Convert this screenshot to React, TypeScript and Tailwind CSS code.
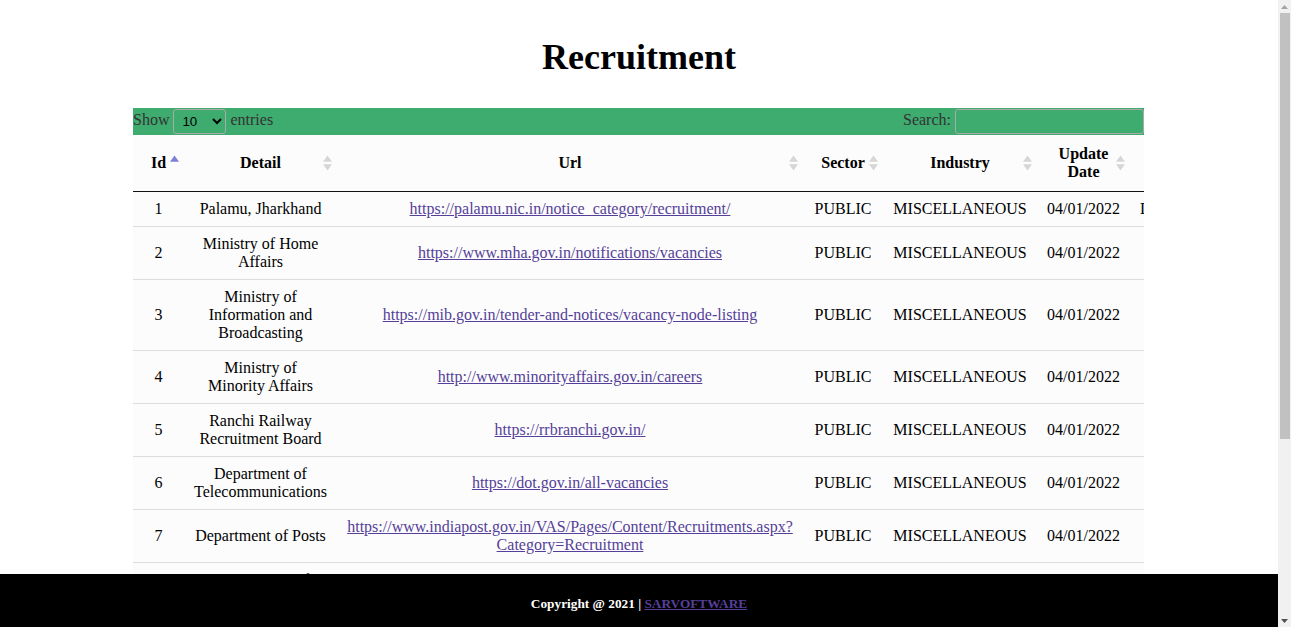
import React from "react";

type Row = {
  id: number;
  detail: string[];
  url: string[];
  desc: string;
};

const rows: Row[] = [
  { id: 1, detail: ["Palamu, Jharkhand"], url: ["https://palamu.nic.in/notice_category/recruitment/"], desc: "Deputy Commissioner Office, Palamu" },
  { id: 2, detail: ["Ministry of Home", "Affairs"], url: ["https://www.mha.gov.in/notifications/vacancies"], desc: "Central Govt." },
  { id: 3, detail: ["Ministry of", "Information and", "Broadcasting"], url: ["https://mib.gov.in/tender-and-notices/vacancy-node-listing"], desc: "Central Govt." },
  { id: 4, detail: ["Ministry of", "Minority Affairs"], url: ["http://www.minorityaffairs.gov.in/careers"], desc: "Central Govt." },
  { id: 5, detail: ["Ranchi Railway", "Recruitment Board"], url: ["https://rrbranchi.gov.in/"], desc: "Central Govt." },
  { id: 6, detail: ["Department of", "Telecommunications"], url: ["https://dot.gov.in/all-vacancies"], desc: "Central Govt." },
  { id: 7, detail: ["Department of Posts"], url: ["https://www.indiapost.gov.in/VAS/Pages/Content/Recruitments.aspx?", "Category=Recruitment"], desc: "Central Govt." },
  { id: 8, detail: ["Government of", "Jharkhand"], url: ["https://www.jharkhand.gov.in/"], desc: "State Govt." },
  { id: 9, detail: ["Union Public", "Service Commission"], url: ["https://upsc.gov.in/recruitment/recruitment-advertisement"], desc: "Central Govt." },
  { id: 10, detail: ["Ministry of", "External Affairs"], url: ["https://mea.gov.in/vacancies.htm"], desc: "Central Govt." },
];

function SortBoth() {
  return (
    <svg width="9" height="15" viewBox="0 0 9 15" className="absolute right-[5px] top-1/2 -translate-y-1/2">
      <polygon points="4.5,0 9,6.3 0,6.3" fill="#d6d6d6" />
      <polygon points="0,8.7 9,8.7 4.5,15" fill="#d6d6d6" />
    </svg>
  );
}

function SortAsc() {
  return (
    <svg width="9" height="15" viewBox="0 0 9 15" className="absolute right-[5px] top-1/2 -translate-y-1/2">
      <polygon points="4.5,0 9,6.3 0,6.3" fill="#7f7fd5" />
    </svg>
  );
}

function Lines({ lines }: { lines: string[] }) {
  return (
    <>
      {lines.map((l, i) => (
        <React.Fragment key={i}>
          {i > 0 && <br />}
          {l}
        </React.Fragment>
      ))}
    </>
  );
}

function Scrollbar() {
  return (
    <div className="w-[13px] shrink-0 h-full bg-[#f1f1f1] flex flex-col">
      <div className="h-[13px] shrink-0 flex items-center justify-center">
        <svg width="7" height="4" viewBox="0 0 7 4">
          <polygon points="3.5,0 7,4 0,4" fill="#a3a3a3" />
        </svg>
      </div>
      <div className="h-[426px] ml-[2px] mr-[1px] bg-[#c1c1c1]" />
      <div className="flex-1" />
      <div className="h-[13px] shrink-0 flex items-center justify-center">
        <svg width="7" height="4" viewBox="0 0 7 4">
          <polygon points="0,0 7,0 3.5,4" fill="#505050" />
        </svg>
      </div>
    </div>
  );
}

export default function App() {
  return (
    <div className="flex h-screen w-full overflow-hidden bg-white font-['Liberation_Serif',serif] leading-[normal] text-black text-[16px]">
      <div className="flex-1 min-w-0 flex flex-col">
        <div className="flex-1 min-h-0 overflow-hidden pt-[36px]">
          <h1 className="text-center text-[36px] font-bold mb-[30px]">Recruitment</h1>
          <div className="w-[1011px] ml-[133px]">
            <div className="flex items-start justify-between h-[27px] py-[1px] bg-[#3eab6f] text-[#333]">
              <div className="flex items-start">
                <span className="mt-[2px]">Show</span>
                <select
                  defaultValue="10"
                  className="ml-[4px] mr-[4px] h-[25px] w-[53px] border border-[#aaa] rounded-[3px] bg-transparent px-[4px] text-[13.33px] font-['Liberation_Sans',Arial,sans-serif] text-black"
                >
                  <option value="10">10</option>
                  <option value="25">25</option>
                  <option value="50">50</option>
                  <option value="100">100</option>
                </select>
                <span className="mt-[2px]">entries</span>
              </div>
              <div className="flex items-start">
                <span className="mt-[2px]">Search:</span>
                <input
                  type="search"
                  className="ml-[4px] h-[25px] w-[189px] border border-[#aaa] rounded-[3px] bg-transparent px-[4px] outline-none"
                />
              </div>
            </div>
            <div className="overflow-hidden bg-[#fcfcfc]">
              <table className="table-fixed w-[1197px] border-collapse">
                <colgroup>
                  <col className="w-[51px]" />
                  <col className="w-[153px]" />
                  <col className="w-[466px]" />
                  <col className="w-[80px]" />
                  <col className="w-[154px]" />
                  <col className="w-[93px]" />
                  <col className="w-[200px]" />
                </colgroup>
                <thead>
                  <tr className="border-b border-[#111]">
                    <th className="relative px-[10px] py-[10px] text-center font-bold">Id<SortAsc /></th>
                    <th className="relative px-[10px] py-[10px] text-center font-bold">Detail<SortBoth /></th>
                    <th className="relative px-[10px] py-[10px] text-center font-bold">Url<SortBoth /></th>
                    <th className="relative px-[10px] py-[10px] text-center font-bold">Sector<SortBoth /></th>
                    <th className="relative px-[10px] py-[10px] text-center font-bold">Industry<SortBoth /></th>
                    <th className="relative px-[10px] py-[10px] text-center font-bold">Update<br />Date<SortBoth /></th>
                    <th className="relative px-[10px] py-[10px] text-center font-bold">Description<SortBoth /></th>
                  </tr>
                </thead>
                <tbody>
                  {rows.map((r, i) => (
                    <tr key={r.id} className={i > 0 ? "border-t border-[#ddd]" : ""}>
                      <td className="px-[10px] py-[8px] text-center">{r.id}</td>
                      <td className="px-[10px] py-[8px] text-center"><Lines lines={r.detail} /></td>
                      <td className="px-[10px] py-[8px] text-center">
                        <a href="#" className="text-[#553f99] underline">
                          <Lines lines={r.url} />
                        </a>
                      </td>
                      <td className="px-[10px] py-[8px] text-center">PUBLIC</td>
                      <td className="px-[10px] py-[8px] text-center">MISCELLANEOUS</td>
                      <td className="px-[10px] py-[8px] text-center">04/01/2022</td>
                      <td className="px-[10px] py-[8px] text-center whitespace-nowrap">{r.desc}</td>
                    </tr>
                  ))}
                </tbody>
              </table>
            </div>
            <div className="flex items-center justify-between pt-[12px] text-[#333]">
              <div>Showing 1 to 10 of 42 entries</div>
              <div className="flex items-center gap-[6px]">
                <span className="px-[10px] text-[#666]">Previous</span>
                <span className="px-[10px] border border-[#979797] bg-[#f2f2f2]">1</span>
                <span className="px-[10px]">2</span>
                <span className="px-[10px]">3</span>
                <span className="px-[10px]">4</span>
                <span className="px-[10px]">5</span>
                <span className="px-[10px]">Next</span>
              </div>
            </div>
          </div>
        </div>
        <footer className="h-[53px] shrink-0 bg-black pt-[22px] text-center text-[13.3px] font-bold text-white">
          Copyright @ 2021 | <a href="#" className="text-[#553f99] underline">SARVOFTWARE</a>
        </footer>
      </div>
      <Scrollbar />
    </div>
  );
}
